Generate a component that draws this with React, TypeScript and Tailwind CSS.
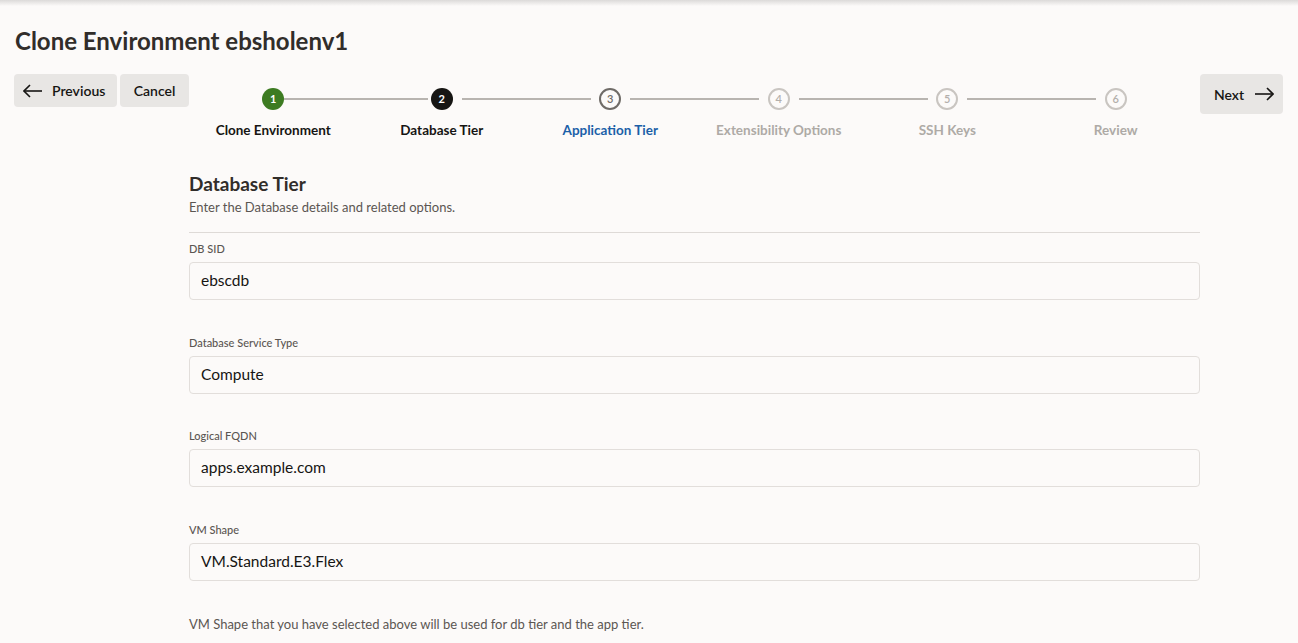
import React from 'react';

const steps = [
  { n: 1, label: 'Clone Environment', state: 'done' },
  { n: 2, label: 'Database Tier', state: 'current' },
  { n: 3, label: 'Application Tier', state: 'next' },
  { n: 4, label: 'Extensibility Options', state: 'todo' },
  { n: 5, label: 'SSH Keys', state: 'todo' },
  { n: 6, label: 'Review', state: 'todo' },
];

const fields = [
  { label: 'DB SID', value: 'ebscdb' },
  { label: 'Database Service Type', value: 'Compute' },
  { label: 'Logical FQDN', value: 'apps.example.com' },
  { label: 'VM Shape', value: 'VM.Standard.E3.Flex' },
];

const Arrow = ({ dir }: { dir: 'left' | 'right' }) => (
  <svg width="20" height="14" viewBox="0 0 20 14" fill="none" stroke="#161513" strokeWidth="1.6">
    {dir === 'left' ? (
      <>
        <path d="M1 7h18" />
        <path d="M7 1L1 7l6 6" />
      </>
    ) : (
      <>
        <path d="M1 7h18" />
        <path d="M13 1l6 6-6 6" />
      </>
    )}
  </svg>
);

const Circle = ({ n, state }: { n: number; state: string }) => {
  if (state === 'done')
    return (
      <div className="w-[22px] h-[22px] rounded-full bg-[#3d7b22] text-white text-[11px] font-bold flex items-center justify-center">
        {n}
      </div>
    );
  if (state === 'current')
    return (
      <div className="w-[22px] h-[22px] rounded-full bg-[#161513] text-white text-[11px] font-bold flex items-center justify-center">
        {n}
      </div>
    );
  if (state === 'next')
    return (
      <div className="w-[22px] h-[22px] rounded-full border-2 border-[#6f6b67] text-[#6f6b67] text-[11px] font-semibold flex items-center justify-center">
        {n}
      </div>
    );
  return (
    <div className="w-[22px] h-[22px] rounded-full border-2 border-[#c9c5c1] text-[#b3afab] text-[11px] font-semibold flex items-center justify-center">
      {n}
    </div>
  );
};

const Stepper = () => (
  <div className="flex w-[1011px] pt-[14px]">
    {steps.map((s, i) => (
      <div key={s.n} className="flex-1 flex flex-col items-center relative">
        <div className="relative flex items-center justify-center">
          <Circle n={s.n} state={s.state} />
        </div>
        {i < steps.length - 1 && (
          <div
            className={
              i === 0
                ? 'absolute top-[10px] left-[calc(50%+11px)] w-[144px] h-[2px] bg-[#b8b4b0]'
                : 'absolute top-[10px] left-[calc(50%+20px)] w-[129px] h-[2px] bg-[#b8b4b0]'
            }
          />
        )}
        <div
          className={
            'mt-[11px] text-[13.5px] leading-[18px] font-bold whitespace-nowrap ' +
            (s.state === 'next'
              ? 'text-[#1b5fa8]'
              : s.state === 'todo'
              ? 'text-[#aeaaa6]'
              : 'text-[#161513]')
          }
        >
          {s.label}
        </div>
      </div>
    ))}
  </div>
);

export default function App() {
  return (
    <div className="min-h-screen bg-[#fcfaf9] text-[#161513] font-['Lato',sans-serif]">
      <div className="h-[6px] bg-gradient-to-b from-[#dcdad9] to-[#fcfaf9]" />
      <h1 className="mt-[19px] px-[15px] text-[24px] leading-[32px] font-bold text-[#312d2a]">
        Clone Environment ebsholenv1
      </h1>
      <div className="mt-[17px] flex items-start pl-[14px] pr-[15px]">
        <div className="w-[175px] flex gap-[3px]">
          <button className="w-[103px] h-[33px] rounded-[4px] bg-[#e8e6e4] flex items-center gap-[9px] pl-[9px] text-[14px] font-semibold">
            <Arrow dir="left" />
            Previous
          </button>
          <button className="w-[69px] h-[33px] rounded-[4px] bg-[#e8e6e4] flex items-center justify-center text-[14px] font-semibold">
            Cancel
          </button>
        </div>
        <Stepper />
        <div className="flex-1 flex justify-end">
          <button className="w-[83px] h-[40px] rounded-[4px] bg-[#e8e6e4] flex items-center gap-[10px] pl-[14px] text-[14px] font-semibold">
            Next
            <Arrow dir="right" />
          </button>
        </div>
      </div>

      <div className="ml-[189px] w-[1011px] mt-[33px]">
        <h2 className="text-[19px] leading-[24px] font-bold text-[#312d2a]">Database Tier</h2>
        <p className="mt-[2px] text-[13px] leading-[18px] text-[#5b5652]">
          Enter the Database details and related options.
        </p>
        <div className="mt-[16px] border-t border-[#dedad7]" />
        <div className="pt-[8px]">
          {fields.map((f) => (
            <div key={f.label} className="mb-[34.5px]">
              <div className="text-[11px] leading-[16px] text-[#5b5652] font-medium">{f.label}</div>
              <div className="mt-[5px] h-[38px] rounded-[4px] border border-[#e2dedb] bg-[#fcfaf9] flex items-center px-[11px] text-[15.5px]">
                {f.value}
              </div>
            </div>
          ))}
        </div>
        <p className="text-[13px] leading-[18px] text-[#5b5652]">
          VM Shape that you have selected above will be used for db tier and the app tier.
        </p>
      </div>
    </div>
  );
}
